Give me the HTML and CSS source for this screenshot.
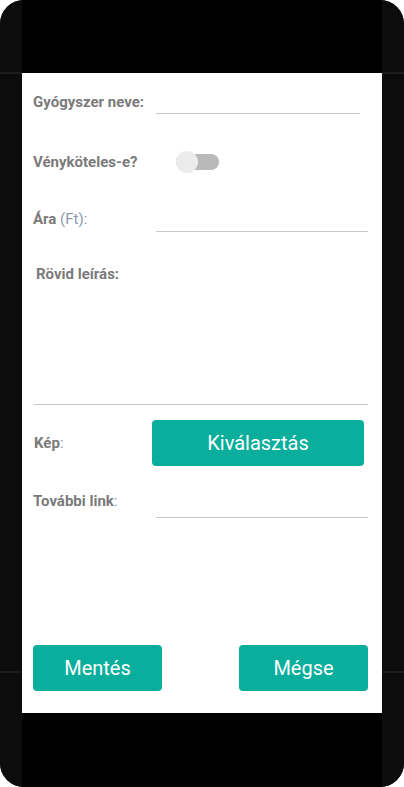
FILE: index.html
```html
<!DOCTYPE html>
<html lang="hu">
<head>
<meta charset="utf-8">
<title>Gyógyszer</title>
<link rel="stylesheet" href="styles.css">
</head>
<body>
<div class="phone">
  <div class="side"></div>
  <div class="screen">
    <div class="bar-top"></div>
    <div class="content">
      <div class="row row-name">
        <label class="label">Gyógyszer neve:</label>
        <div class="line line-short"></div>
      </div>
      <div class="row row-toggle">
        <label class="label">Vényköteles-e?</label>
        <div class="toggle"><span class="track"></span><span class="thumb"></span></div>
      </div>
      <div class="row row-price">
        <label class="label">Ára <span class="light">(Ft):</span></label>
        <div class="line"></div>
      </div>
      <div class="desc">
        <label class="label desc-label">Rövid leírás:</label>
        <div class="desc-line"></div>
      </div>
      <div class="row row-image">
        <label class="label">Kép<span class="colon">:</span></label>
        <button class="btn btn-pick">Kiválasztás</button>
      </div>
      <div class="row row-link">
        <label class="label">További link<span class="colon">:</span></label>
        <div class="line"></div>
      </div>
      <div class="spacer"></div>
      <div class="actions">
        <button class="btn btn-action">Mentés</button>
        <button class="btn btn-action">Mégse</button>
      </div>
    </div>
    <div class="bar-bottom"></div>
  </div>
  <div class="side"></div>
</div>
</body>
</html>
```

FILE: styles.css
```css
html, body {
  margin: 0;
  padding: 0;
  background: #ffffff;
}

.phone {
  width: 404px;
  height: 787px;
  border-radius: 24px;
  overflow: hidden;
  background: #0c0c0c;
  display: grid;
  grid-template-columns: 22px 360px 22px;
}

.side {
  background:
    linear-gradient(#1c1c1c, #1c1c1c) 0 72px / 100% 2px no-repeat,
    linear-gradient(#1c1c1c, #1c1c1c) 0 671px / 100% 2px no-repeat,
    #0c0c0c;
}

.screen {
  display: flex;
  flex-direction: column;
  background: #000;
}

.bar-top {
  height: 73px;
  background: #000;
}

.bar-bottom {
  height: 74px;
  background: #000;
}

.content {
  height: 640px;
  background: #ffffff;
  display: flex;
  flex-direction: column;
  padding: 0 14px 0 11px;
  box-sizing: border-box;
  font-family: Roboto, "Noto Sans", sans-serif;
}

.row {
  display: grid;
  grid-template-columns: 123px 1fr;
}

.label {
  font-size: 15px;
  line-height: 20px;
  font-weight: 700;
  color: #7a7a7a;
  white-space: nowrap;
}

.light, .colon {
  font-weight: 400;
  color: #8c9aad;
}

.line {
  height: 1px;
  background: #c8c8c8;
  align-self: end;
}

.line-short {
  margin-right: 8px;
}

.row-name {
  margin-top: 19px;
  height: 22px;
}

.row-toggle {
  margin-top: 37px;
  height: 20px;
  align-items: center;
}

.toggle {
  position: relative;
  width: 44px;
  height: 22px;
  margin-left: 20px;
}

.track {
  position: absolute;
  left: 0;
  top: 3px;
  width: 43px;
  height: 16px;
  border-radius: 8px;
  background: #b9b9b9;
}

.thumb {
  position: absolute;
  left: 0;
  top: 0;
  width: 22px;
  height: 22px;
  border-radius: 50%;
  background: #ececec;
}

.row-price {
  margin-top: 38px;
  height: 23px;
}

.desc {
  margin-top: 32px;
  display: flex;
  flex-direction: column;
}

.desc-label {
  padding-left: 3px;
}

.desc-line {
  margin-top: 120px;
  margin-left: 1px;
  height: 1px;
  background: #c8c8c8;
}

.row-image {
  margin-top: 15px;
  grid-template-columns: 119px 212px;
  align-items: center;
}

.row-image .label {
  padding-left: 1px;
}

.btn {
  border: none;
  background: #09ae9c;
  color: #ffffff;
  font-family: Roboto, "Noto Sans", sans-serif;
  font-size: 20px;
  font-weight: 400;
  border-radius: 4px;
  padding: 0;
  cursor: pointer;
}

.btn-pick {
  height: 46px;
}

.row-link {
  margin-top: 25px;
  height: 27px;
}

.spacer {
  flex: 1;
}

.actions {
  display: flex;
  justify-content: space-between;
  margin-bottom: 22px;
}

.btn-action {
  width: 129px;
  height: 46px;
}
```
